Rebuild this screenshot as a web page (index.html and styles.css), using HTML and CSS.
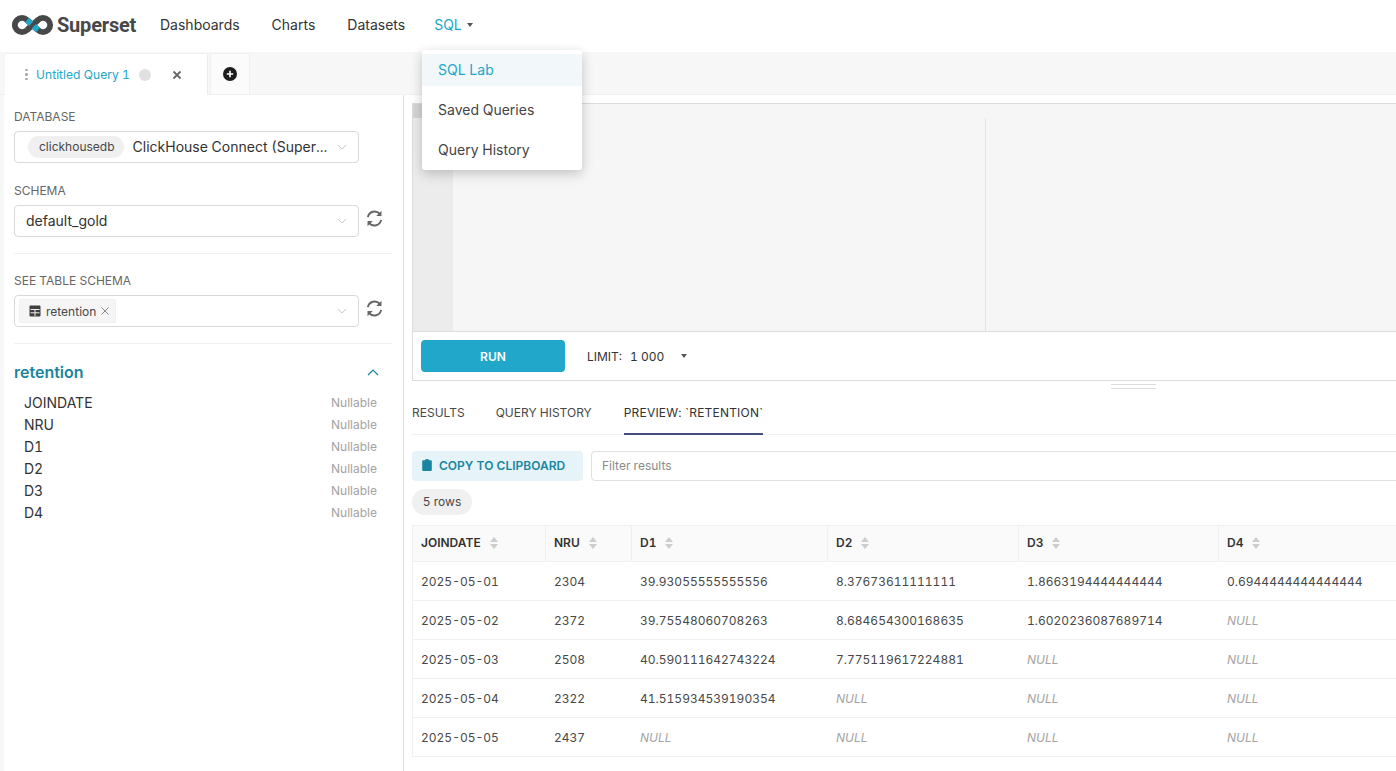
FILE: index.html
```html
<!DOCTYPE html>
<html lang="en">
<head>
<meta charset="utf-8">
<title>SQL Lab</title>
<link rel="stylesheet" href="styles.css">
</head>
<body>
<header class="topbar">
  <a class="brand">
    <svg class="brand-mark" viewBox="12 12 42 22" width="42" height="22">
      <path class="mark-dark" d="M27 28L38 18A7.07 7.07 0 1 1 38 28L34 24.4M31 21.6L27 18A7.07 7.07 0 1 0 27 28"/>
      <path class="mark-blue" d="M27 18L31.2 21.8M33.8 24.2L38 28"/>
    </svg>
    <span class="brand-name">Superset</span>
  </a>
  <nav class="nav">
    <a class="nav-link">Dashboards</a>
    <a class="nav-link">Charts</a>
    <a class="nav-link">Datasets</a>
    <a class="nav-link nav-active">SQL<span class="caret"></span></a>
  </nav>
  <ul class="menu">
    <li class="menu-item menu-item-active">SQL Lab</li>
    <li class="menu-item">Saved Queries</li>
    <li class="menu-item">Query History</li>
  </ul>
</header>

<div class="tabbar">
  <div class="tab">
    <span class="drag"><i></i><i></i><i></i></span>
    <span class="tab-title">Untitled Query 1</span>
    <span class="tab-dot"></span>
    <svg class="tab-close" viewBox="0 0 10 10" width="10" height="10"><path d="M1.5 1.5L8.5 8.5M8.5 1.5L1.5 8.5"/></svg>
  </div>
  <div class="tab-add">
    <svg viewBox="0 0 14 14" width="14" height="14"><circle cx="7" cy="7" r="7" fill="#1d1d1d"/><path d="M7 3.8V10.2M3.8 7H10.2" stroke="#fff" stroke-width="1.6"/></svg>
  </div>
</div>

<main class="workspace">
  <aside class="sidebar">
    <div class="field field-db">
      <label class="field-label">DATABASE</label>
      <div class="select-row">
        <div class="select select-db">
          <span class="pill-db">clickhousedb</span>
          <span class="select-value select-ellipsis">ClickHouse Connect (Super...</span>
          <svg class="chev" viewBox="0 0 12 7" width="10" height="6"><path d="M1 1L6 6L11 1"/></svg>
        </div>
      </div>
    </div>
    <div class="field field-schema">
      <label class="field-label">SCHEMA</label>
      <div class="select-row">
        <div class="select">
          <span class="select-value">default_gold</span>
          <svg class="chev" viewBox="0 0 12 7" width="10" height="6"><path d="M1 1L6 6L11 1"/></svg>
        </div>
        <svg class="refresh" viewBox="0 0 18 18" width="17" height="17"><path d="M2 7.6A7.2 7.2 0 0 1 14.6 4.2M16 10.4A7.2 7.2 0 0 1 3.4 13.8"/><path class="refresh-tip" d="M16.4 0.8V6.400H10.800ZM1.600 17.200V11.600H7.200Z"/></svg>
      </div>
    </div>
    <hr class="rule">
    <div class="field field-table">
      <label class="field-label">SEE TABLE SCHEMA</label>
      <div class="select-row">
        <div class="select select-tag">
          <span class="tag">
            <svg class="tag-icon" viewBox="0 0 12 12" width="12" height="12"><path d="M1.5 0.5H10.5A1 1 0 0 1 11.500 1.500V10.500A1 1 0 0 1 10.500 11.500H1.500A1 1 0 0 1 0.500 10.500V1.500A1 1 0 0 1 1.500 0.500Z" fill="#3f3f3f"/><path d="M1.5 4.500H10.500M1.500 7.800H10.500M6 4.500V11" stroke="#f0f0f0" stroke-width="1" fill="none"/></svg>
            <span>retention</span>
            <svg class="tag-x" viewBox="0 0 8 8" width="8" height="8"><path d="M0.500 0.500L7.500 7.500M7.500 0.500L0.500 7.500"/></svg>
          </span>
          <svg class="chev" viewBox="0 0 12 7" width="10" height="6"><path d="M1 1L6 6L11 1"/></svg>
        </div>
        <svg class="refresh" viewBox="0 0 18 18" width="17" height="17"><path d="M2 7.6A7.2 7.2 0 0 1 14.6 4.2M16 10.4A7.2 7.2 0 0 1 3.4 13.8"/><path class="refresh-tip" d="M16.4 0.8V6.400H10.800ZM1.600 17.200V11.600H7.200Z"/></svg>
      </div>
    </div>
    <hr class="rule">
    <div class="table-head">
      <span class="table-name">retention</span>
      <svg class="chev-up" viewBox="0 0 12 7" width="12" height="7"><path d="M1 6L6 1L11 6"/></svg>
    </div>
    <ul class="columns">
      <li class="column"><span>JOINDATE</span><span class="nullable">Nullable</span></li>
      <li class="column"><span>NRU</span><span class="nullable">Nullable</span></li>
      <li class="column"><span>D1</span><span class="nullable">Nullable</span></li>
      <li class="column"><span>D2</span><span class="nullable">Nullable</span></li>
      <li class="column"><span>D3</span><span class="nullable">Nullable</span></li>
      <li class="column"><span>D4</span><span class="nullable">Nullable</span></li>
    </ul>
  </aside>

  <section class="content">
    <div class="editor-box">
      <div class="editor">
        <div class="gutter"><div class="gutter-active"></div></div>
        <div class="code">
          <div class="code-active"></div>
          <div class="code-body"><div class="print-margin"></div></div>
        </div>
      </div>
      <div class="toolbar">
        <button class="run">RUN</button>
        <span class="limit">LIMIT:</span>
        <span class="limit-value">1 000</span>
        <span class="caret caret-limit"></span>
      </div>
    </div>
    <div class="resizer"><i></i><i></i></div>
    <div class="tabs">
      <span class="rtab">RESULTS</span>
      <span class="rtab">QUERY HISTORY</span>
      <span class="rtab rtab-active">PREVIEW: `RETENTION`</span>
    </div>
    <div class="actions">
      <button class="copy">
        <svg viewBox="0 0 10 12" width="10" height="12"><path d="M3 1.200A2 1.200 0 0 1 7 1.200H8.800A1 1 0 0 1 9.800 2.200V11A1 1 0 0 1 8.800 12H1.200A1 1 0 0 1 0.200 11V2.200A1 1 0 0 1 1.200 1.200Z" fill="#1985a0"/></svg>
        COPY TO CLIPBOARD
      </button>
      <div class="filter">Filter results</div>
    </div>
    <div class="rowcount">5 rows</div>
    <table class="grid">
      <colgroup>
        <col class="c-date"><col class="c-nru"><col class="c-d1"><col class="c-d2"><col class="c-d3"><col class="c-d4">
      </colgroup>
      <thead>
        <tr>
          <th><span class="th">JOINDATE<span class="sort"></span></span></th>
          <th><span class="th">NRU<span class="sort"></span></span></th>
          <th><span class="th">D1<span class="sort"></span></span></th>
          <th><span class="th">D2<span class="sort"></span></span></th>
          <th><span class="th">D3<span class="sort"></span></span></th>
          <th><span class="th">D4<span class="sort"></span></span></th>
        </tr>
      </thead>
      <tbody>
        <tr><td>2025-05-01</td><td>2304</td><td>39.93055555555556</td><td>8.37673611111111</td><td>1.8663194444444444</td><td>0.6944444444444444</td></tr>
        <tr><td>2025-05-02</td><td>2372</td><td>39.75548060708263</td><td>8.684654300168635</td><td>1.6020236087689714</td><td class="null">NULL</td></tr>
        <tr><td>2025-05-03</td><td>2508</td><td>40.590111642743224</td><td>7.775119617224881</td><td class="null">NULL</td><td class="null">NULL</td></tr>
        <tr><td>2025-05-04</td><td>2322</td><td>41.515934539190354</td><td class="null">NULL</td><td class="null">NULL</td><td class="null">NULL</td></tr>
        <tr><td>2025-05-05</td><td>2437</td><td class="null">NULL</td><td class="null">NULL</td><td class="null">NULL</td><td class="null">NULL</td></tr>
      </tbody>
    </table>
  </section>
</main>
</body>
</html>
```

FILE: styles.css
```css
* { box-sizing: border-box; }
html, body { margin: 0; padding: 0; }
body {
  width: 1396px;
  height: 771px;
  overflow: hidden;
  font-family: Inter, "Liberation Sans", sans-serif;
  font-variant-numeric: tabular-nums;
  color: #323232;
  background: #fff;
  display: flex;
  flex-direction: column;
}
ul { list-style: none; margin: 0; padding: 0; }
button { font-family: inherit; font-variant-numeric: inherit; border: 0; cursor: pointer; }

/* top bar */
.topbar {
  position: relative;
  z-index: 5;
  flex: 0 0 52px;
  display: flex;
  align-items: center;
  padding-left: 12px;
  background: #fff;
}
.brand { display: flex; align-items: center; width: 132px; padding-bottom: 3px; }
.brand-mark { display: block; flex: none; }
.mark-dark { fill: none; stroke: #484848; stroke-width: 6; }
.mark-blue { fill: none; stroke: #20a7c9; stroke-width: 6; }
.brand-name {
  margin-left: 3px;
  font-family: Roboto, sans-serif;
  font-size: 20px;
  font-weight: 700;
  letter-spacing: -.2px;
  color: #484848;
}
.nav { display: flex; align-items: center; padding-bottom: 2px; }
.nav-link { padding: 0 16px; font-size: 14px; line-height: 20px; color: #323232; }
.nav-active { color: #20a7c9; margin-left: -3px; display: flex; align-items: center; }
.caret {
  display: inline-block;
  width: 0;
  height: 0;
  margin-left: 5px;
  border-left: 3px solid transparent;
  border-right: 3px solid transparent;
  border-top: 4px solid #555;
}
.menu {
  position: absolute;
  left: 422px;
  top: 50px;
  width: 160px;
  height: 120px;
  padding: 4px 0;
  background: #fff;
  border-radius: 3px;
  box-shadow: 0 3px 12px rgba(0, 0, 0, .16), 0 6px 16px rgba(0, 0, 0, .06);
}
.menu-item {
  height: 32px;
  margin-bottom: 8px;
  padding: 0 16px;
  font-size: 14px;
  line-height: 32px;
  color: #444;
}
.menu-item-active { background: #f2f7fa; color: #20a7c9; }

/* tab bar */
.tabbar {
  flex: 0 0 43px;
  display: flex;
  align-items: flex-end;
  background: #f7f7f7;
  border-bottom: 1px solid #f0f0f0;
  padding-left: 5px;
}
.tab {
  width: 203px;
  height: 41px;
  margin-bottom: -1px;
  display: flex;
  align-items: center;
  background: #fff;
  border-radius: 2px 2px 0 0;
  border-right: 1px solid #ececec;
  box-shadow: 0 -1px 0 #f0f0f0;
}
.drag { display: flex; flex-direction: column; gap: 2px; margin-left: 20px; }
.drag i { display: block; width: 3px; height: 2.500px; background: #a8a8a8; border-radius: 50%; }
.tab-title { margin-left: 8px; font-size: 12px; line-height: 16px; letter-spacing: .06px; color: #20a7c9; white-space: nowrap; }
.tab-dot { width: 12px; height: 12px; margin-left: 9px; border-radius: 50%; background: #e0e0e0; }
.tab-close { margin-left: 21px; fill: none; stroke: #666; stroke-width: 1.800; }
.tab-add {
  width: 40px;
  height: 41px;
  margin-left: 2px;
  display: flex;
  align-items: center;
  justify-content: center;
  background: #fbfbfb;
  border: 1px solid #f0f0f0;
  border-bottom: 0;
}

/* workspace */
.workspace { flex: 1; min-height: 0; display: flex; }
.sidebar {
  flex: 0 0 404px;
  margin: 0;
  padding: 0 11px 0 10px;
  border-left: 4px solid #f7f7f7;
  border-right: 1px solid #e0e0e0;
}
.field-label { display: block; font-size: 12px; line-height: 16px; color: #666; }
.field-db { padding-top: 14px; }
.field-schema { padding-top: 20px; }
.field-table { padding-top: 19px; }
.field-label { margin-bottom: 6px; }
.select-row { display: flex; align-items: center; }
.select {
  flex: none;
  width: 345px;
  height: 32px;
  display: flex;
  align-items: center;
  padding: 0 11px 0 11px;
  background: #fff;
  border: 1px solid #d9d9d9;
  border-radius: 4px;
}
.select-db { padding-left: 13px; }
.select-tag { padding-left: 4px; }
.pill-db {
  flex: none;
  height: 22px;
  padding: 0 9px 0 11px;
  font-size: 12px;
  line-height: 22px;
  color: #484848;
  background: #f0f0f0;
  border-radius: 11px;
}
.select-value { font-size: 14px; line-height: 20px; color: #323232; }
.select-ellipsis { margin-left: 9px; white-space: nowrap; }
.chev { margin-left: auto; flex: none; fill: none; stroke: #c4c4c4; stroke-width: 1.100; }
.refresh { flex: none; margin-left: 7px; margin-bottom: 6px; fill: none; stroke: #666; stroke-width: 2; }
.refresh-tip { fill: #666; stroke: none; }
.rule { height: 1px; margin: 16px 0 0; border: 0; background: #f0f0f0; }
.tag {
  display: flex;
  align-items: center;
  height: 24px;
  padding: 0 5px 0 9px;
  font-size: 12px;
  color: #484848;
  background: #f5f5f5;
  border: 1px solid #f0f0f0;
  border-radius: 2px;
}
.tag-icon { margin-right: 5px; }
.tag-x { margin-left: 5px; margin-right: 1px; fill: none; stroke: #888; stroke-width: 1; }
.table-head {
  display: flex;
  align-items: center;
  justify-content: space-between;
  height: 24px;
  margin-top: 16px;
  padding-right: 13px;
}
.table-name { font-size: 16px; font-weight: 600; color: #1985a0; }
.chev-up { fill: none; stroke: #1985a0; stroke-width: 1.200; }
.columns { margin-top: 7px; padding: 0 15px 0 10px; }
.column {
  display: flex;
  align-items: center;
  justify-content: space-between;
  height: 22px;
  font-size: 14px;
  color: #323232;
}
.nullable { font-size: 12px; color: #a3a3a3; }

/* main content */
.content { flex: 1; min-width: 0; padding-left: 8px; overflow: hidden; }
.editor-box {
  width: 1000px;
  height: 278px;
  margin-top: 8px;
  border: 1px solid #dcdcdc;
  border-right: 0;
  display: flex;
  flex-direction: column;
}
.editor { flex: 0 0 228px; display: flex; border-bottom: 1px solid #dcdcdc; }
.gutter { flex: 0 0 40px; background: #ececec; }
.gutter-active { height: 14px; background: #d6d6d6; }
.code { flex: 1; display: flex; flex-direction: column; background: #f6f6f6; }
.code-active { flex: 0 0 14px; }
.code-body { flex: 1; padding-left: 532px; }
.print-margin { width: 1px; height: 100%; background: #e4e4e4; }
.toolbar { flex: 1; display: flex; align-items: center; padding-left: 8px; }
.run {
  width: 144px;
  height: 32px;
  font-size: 12px;
  font-weight: 600;
  color: #fff;
  background: #20a7c9;
  border-radius: 4px;
}
.limit { margin-left: 22px; font-size: 12px; color: #323232; }
.limit-value { margin-left: 8px; font-size: 12px; color: #323232; }
.caret-limit { margin-left: 17px; }
.resizer { height: 11px; display: flex; flex-direction: column; align-items: center; padding: 3px 0 0 0; width: 1442px; }
.resizer i { display: block; width: 45px; height: 1px; margin-bottom: 3px; background: #dcdcdc; }
.tabs {
  height: 43px;
  width: 1000px;
  display: flex;
  gap: 31px;
  border-bottom: 1px solid #f0f0f0;
}
.rtab {
  height: 43px;
  padding-top: 13px;
  font-size: 12px;
  line-height: 16px;
  color: #484848;
}
.rtab-active { margin-left: 1px; color: #323232; letter-spacing: .2px; border-bottom: 2px solid #444e7c; }
.actions { display: flex; gap: 8px; margin-top: 16px; width: 1100px; }
.copy {
  flex: none;
  width: 171px;
  height: 30px;
  display: flex;
  align-items: center;
  gap: 7px;
  padding: 0 0 2px 10px;
  font-size: 12px;
  font-weight: 600;
  color: #1985a0;
  background: #e6f4f9;
  border-radius: 4px;
}
.filter {
  flex: none;
  width: 900px;
  height: 30px;
  padding-left: 10px;
  font-size: 12px;
  line-height: 28px;
  color: #8a8a8a;
  border: 1px solid #e0e0e0;
  border-radius: 4px;
}
.rowcount {
  width: 60px;
  height: 26px;
  margin-top: 8px;
  font-size: 12px;
  line-height: 26px;
  text-align: center;
  color: #484848;
  background: #f0f0f0;
  border-radius: 13px;
}
.grid {
  margin-top: 10px;
  width: 1006px;
  table-layout: fixed;
  border-collapse: collapse;
  font-size: 12px;
  color: #484848;
}
.c-date { width: 133px; }
.c-nru { width: 86px; }
.c-d1 { width: 196px; }
.c-d2 { width: 191px; }
.c-d3 { width: 200px; }
.c-d4 { width: 200px; }
.grid th {
  height: 36px;
  padding: 0 8px 2px;
  text-align: left;
  font-weight: 600;
  color: #323232;
  background: #fafafa;
  border-top: 1px solid #f0f0f0;
  border-bottom: 1px solid #f0f0f0;
  border-left: 1px solid #f0f0f0;
}
.grid td {
  height: 39px;
  padding: 0 8px;
  border-bottom: 1px solid #f0f0f0;
  white-space: nowrap;
}
.grid td + td { padding-left: 8.500px; }
.grid td:first-child { border-left: 1px solid #f0f0f0; }
.grid .null { font-style: italic; color: #a3a3a3; }
.th { display: flex; align-items: center; }
.sort {
  position: relative;
  display: inline-block;
  width: 8px;
  height: 12px;
  margin-left: 9px;
}
.sort::before, .sort::after {
  content: "";
  position: absolute;
  left: 0;
  border-left: 4px solid transparent;
  border-right: 4px solid transparent;
}
.sort::before { top: 0; border-bottom: 5px solid #cdcdcd; }
.sort::after { bottom: 0; border-top: 5px solid #cdcdcd; }
```
